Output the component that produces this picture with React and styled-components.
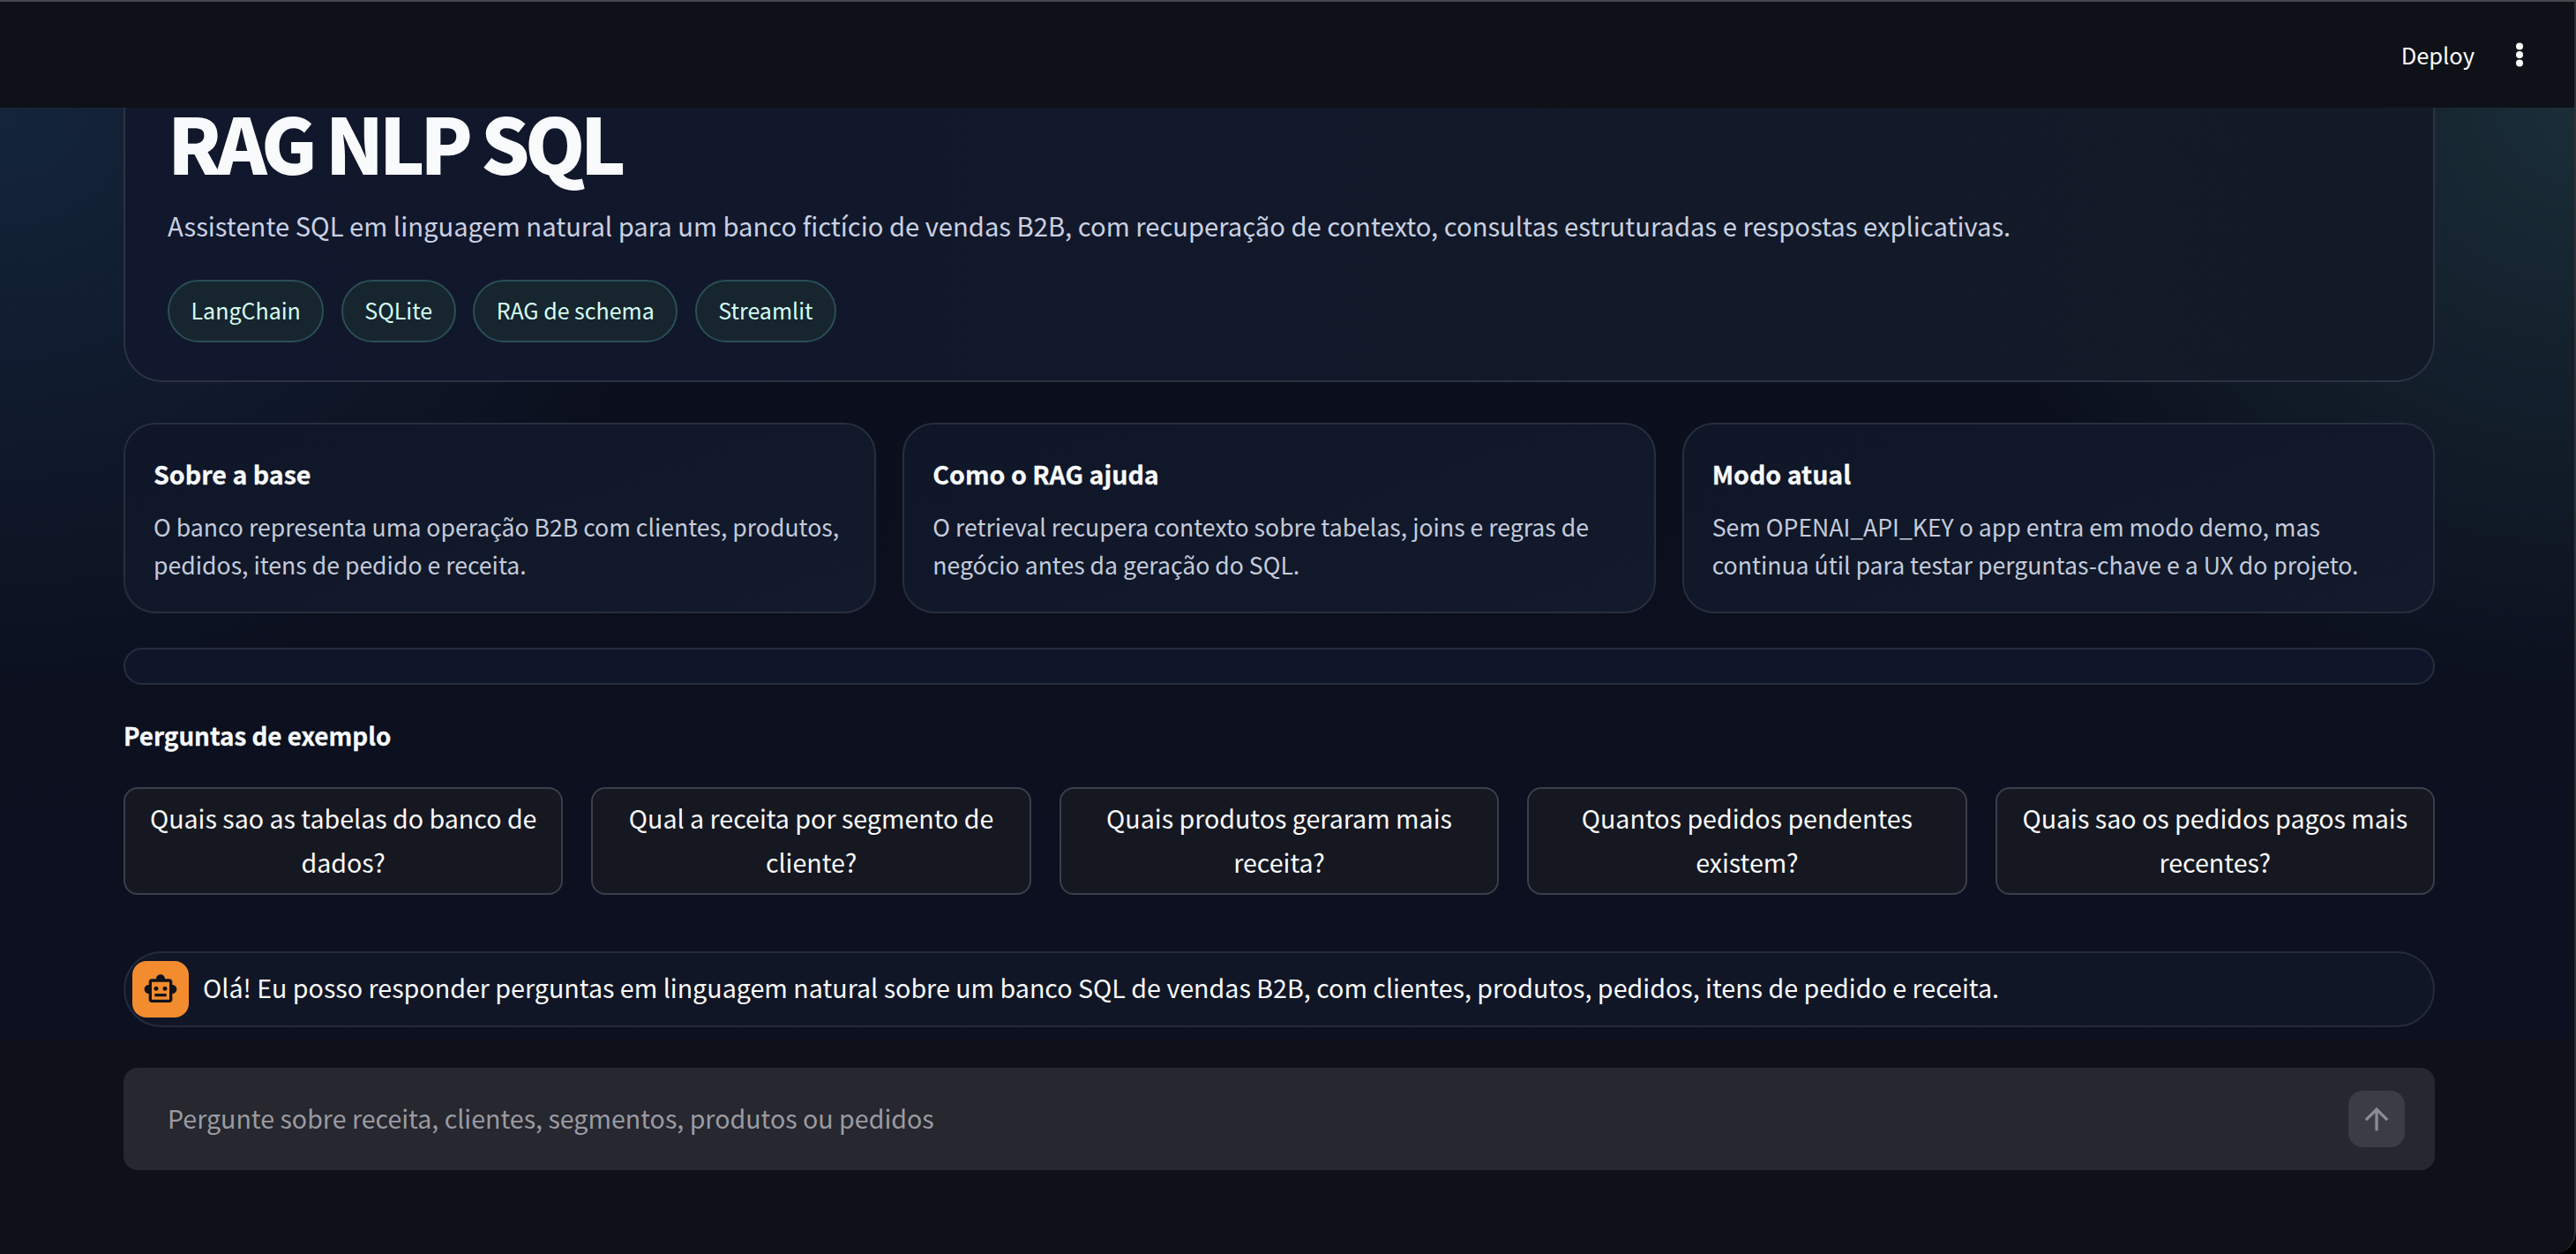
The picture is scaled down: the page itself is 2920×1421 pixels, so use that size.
import React from "react";
import styled, { createGlobalStyle } from "styled-components";
import { MdOutlineSmartToy, MdArrowUpward } from "react-icons/md";

const GlobalStyle = createGlobalStyle`
  html, body {
    margin: 0;
    padding: 0;
    background: #000;
  }
  body {
    font-family: "Noto Sans CJK JP", "Noto Sans", sans-serif;
    color: #fafafa;
  }
  * {
    box-sizing: border-box;
  }
`;

const Frame = styled.div`
  display: flex;
  flex-direction: column;
  height: 100vh;
  overflow: hidden;
  background: #0e1117;
  border-top: 2px solid #47474d;
  border-right: 2px solid #2f3035;
  border-bottom-right-radius: 26px;
`;

const Header = styled.header`
  flex: 0 0 120px;
  display: flex;
  align-items: center;
  justify-content: flex-end;
  gap: 43px;
  padding: 0 54px 0 0;
  background: #0e1117;
`;

const DeployLabel = styled.span`
  font-size: 25.5px;
  line-height: 40px;
  color: #fafafa;
`;

const Main = styled.main`
  flex: 0 0 1056px;
  display: flex;
  flex-direction: column;
  padding: 0 158px 14px 140px;
  background:
    radial-gradient(ellipse 800px 680px at 0 0, rgba(26, 52, 80, 0.6), transparent 100%),
    radial-gradient(ellipse 700px 680px at 100% 0, rgba(36, 66, 75, 0.6), transparent 100%),
    linear-gradient(180deg, #0b0f1c 0%, #0c1020 100%);
`;

const Hero = styled.section`
  height: 311px;
  padding: 0 48px;
  background: linear-gradient(90deg, #11172c 0%, #131a27 100%);
  border: 2px solid #2b3242;
  border-top: 0;
  border-radius: 0 0 44px 44px;
`;

const Title = styled.h1`
  margin: -2px 0 0;
  font-size: 87px;
  line-height: 80px;
  font-weight: 900;
  letter-spacing: -5.5px;
  color: #f8fafc;
`;

const Lead = styled.p`
  margin: 32px 0 0;
  font-size: 29.2px;
  line-height: 46px;
  color: #c9d1e2;
`;

const PillRow = styled.div`
  display: flex;
  gap: 19.5px;
  margin-top: 39px;
`;

const Pill = styled.span`
  display: flex;
  align-items: center;
  height: 71px;
  padding: 0 24.5px 3px;
  font-size: 25px;
  color: #d5fff3;
  background: #17252f;
  border: 2px solid #2b4e56;
  border-radius: 999px;
`;

const CardGrid = styled.div`
  display: grid;
  grid-template-columns: repeat(3, 1fr);
  gap: 30px;
  margin-top: 46px;
`;

const Card = styled.article`
  height: 216px;
  padding: 31px 32px 0;
  background: linear-gradient(160deg, #0f1628 0%, #121a2b 100%);
  border: 2px solid #272e3e;
  border-radius: 36px;
`;

const CardTitle = styled.h3`
  margin: 0;
  font-size: 28.6px;
  line-height: 50px;
  font-weight: 700;
  color: #f8fafc;
  -webkit-text-stroke: 0.3px #f8fafc;
`;

const CardText = styled.p`
  margin: 13px 0 0;
  font-size: 26.6px;
  line-height: 43px;
  color: #c4cbdb;
`;

const EmptyBar = styled.div`
  height: 42px;
  margin-top: 39px;
  background: #0f1629;
  border: 2px solid #272e3e;
  border-radius: 21px;
`;

const SectionTitle = styled.h4`
  margin: 32px 0 0;
  font-size: 27.8px;
  line-height: 50px;
  font-weight: 700;
  color: #f8fafc;
  -webkit-text-stroke: 0.3px #f8fafc;
`;

const ButtonRow = styled.div`
  display: grid;
  grid-template-columns: repeat(5, 1fr);
  gap: 32px;
  margin-top: 34px;
`;

const ExampleButton = styled.button`
  height: 122px;
  padding: 8px 24px 12px;
  font-family: inherit;
  font-size: 28.6px;
  line-height: 50px;
  text-align: center;
  color: #fafafa;
  background: #151821;
  border: 2px solid #3b3f4b;
  border-radius: 16px;
`;

const Message = styled.div`
  display: flex;
  align-items: center;
  gap: 16px;
  height: 86px;
  margin-top: 64px;
  padding: 0 8px;
  background: #101626;
  border: 2px solid #252b3e;
  border-radius: 43px;
`;

const Avatar = styled.div`
  flex: 0 0 64px;
  display: flex;
  align-items: center;
  justify-content: center;
  height: 64px;
  color: #10131a;
  background: #f28c2f;
  border-radius: 16px;
`;

const MessageText = styled.p`
  margin: 0 0 4px;
  font-size: 28.65px;
  line-height: 46px;
  color: #fafafa;
`;

const BottomBar = styled.div`
  flex: 1;
  padding: 32px 158px 0 140px;
  background: #0e1117;
`;

const ChatInput = styled.div`
  display: flex;
  align-items: center;
  justify-content: space-between;
  height: 116px;
  padding: 0 34px 0 50px;
  background: #26272f;
  border-radius: 16px;
`;

const Placeholder = styled.span`
  margin-bottom: 3px;
  font-size: 28.6px;
  color: #9a9ba2;
`;

const SendButton = styled.div`
  display: flex;
  align-items: center;
  justify-content: center;
  width: 64px;
  height: 64px;
  color: #8b8c93;
  background: #3a3c46;
  border-radius: 16px;
`;

const MoreDots = () => (
  <svg width="16" height="40" viewBox="0 0 16 40" fill="#fafafa">
    <circle cx="8" cy="10.5" r="4" />
    <circle cx="8" cy="20" r="4" />
    <circle cx="8" cy="29.5" r="4" />
  </svg>
);

const pills = ["LangChain", "SQLite", "RAG de schema", "Streamlit"];

const cards = [
  {
    title: "Sobre a base",
    text: "O banco representa uma operação B2B com clientes, produtos, pedidos, itens de pedido e receita."
  },
  {
    title: "Como o RAG ajuda",
    text: "O retrieval recupera contexto sobre tabelas, joins e regras de negócio antes da geração do SQL."
  },
  {
    title: "Modo atual",
    text: "Sem OPENAI_API_KEY o app entra em modo demo, mas continua útil para testar perguntas-chave e a UX do projeto."
  }
];

const questions = [
  "Quais sao as tabelas do banco de dados?",
  "Qual a receita por segmento de cliente?",
  "Quais produtos geraram mais receita?",
  "Quantos pedidos pendentes existem?",
  "Quais sao os pedidos pagos mais recentes?"
];

export default function App() {
  return (
    <Frame>
      <GlobalStyle />
      <Header>
        <DeployLabel>Deploy</DeployLabel>
        <MoreDots />
      </Header>
      <Main>
        <Hero>
          <Title>RAG NLP SQL</Title>
          <Lead>
            Assistente SQL em linguagem natural para um banco fictício de vendas B2B, com recuperação de contexto, consultas estruturadas e respostas explicativas.
          </Lead>
          <PillRow>
            {pills.map(pill => (
              <Pill key={pill}>{pill}</Pill>
            ))}
          </PillRow>
        </Hero>
        <CardGrid>
          {cards.map(card => (
            <Card key={card.title}>
              <CardTitle>{card.title}</CardTitle>
              <CardText>{card.text}</CardText>
            </Card>
          ))}
        </CardGrid>
        <EmptyBar />
        <SectionTitle>Perguntas de exemplo</SectionTitle>
        <ButtonRow>
          {questions.map(question => (
            <ExampleButton key={question}>{question}</ExampleButton>
          ))}
        </ButtonRow>
        <Message>
          <Avatar>
            <MdOutlineSmartToy size={40} />
          </Avatar>
          <MessageText>
            Olá! Eu posso responder perguntas em linguagem natural sobre um banco SQL de vendas B2B, com clientes, produtos, pedidos, itens de pedido e receita.
          </MessageText>
        </Message>
      </Main>
      <BottomBar>
        <ChatInput>
          <Placeholder>Pergunte sobre receita, clientes, segmentos, produtos ou pedidos</Placeholder>
          <SendButton>
            <MdArrowUpward size={40} />
          </SendButton>
        </ChatInput>
      </BottomBar>
    </Frame>
  );
}
